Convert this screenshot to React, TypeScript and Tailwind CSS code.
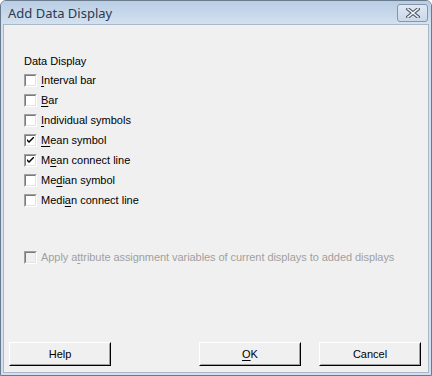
import React from "react";

const items = [
  { pre: "", key: "I", post: "nterval bar", checked: false },
  { pre: "", key: "B", post: "ar", checked: false },
  { pre: "", key: "I", post: "ndividual symbols", checked: false },
  { pre: "", key: "M", post: "ean symbol", checked: true },
  { pre: "M", key: "e", post: "an connect line", checked: true },
  { pre: "Me", key: "d", post: "ian symbol", checked: false },
  { pre: "Medi", key: "a", post: "n connect line", checked: false },
];

function CheckBox({ checked, disabled }: { checked?: boolean; disabled?: boolean }) {
  return (
    <span className="w-[13px] h-[13px] border border-t-[#a0a0a0] border-l-[#a0a0a0] border-b-white border-r-white flex shrink-0">
      <span
        className={`flex-1 border border-t-[#7a7a7a] border-l-[#7a7a7a] border-b-[#e3e3e3] border-r-[#e3e3e3] flex items-center justify-center ${
          disabled ? "bg-[#f0f0f0]" : "bg-white"
        }`}
      >
        {checked && (
          <svg width="7" height="7" viewBox="0 0 7 7">
            <path d="M0 2 L0 4 L2 6 L7 1 L7 -1 L2 4 Z" fill="#000" />
          </svg>
        )}
      </span>
    </span>
  );
}

function Button({ children }: { children: React.ReactNode }) {
  return (
    <button className="w-[102px] h-[24px] border border-t-white border-l-white border-b-black border-r-black bg-[#f0f0f0] flex">
      <span className="flex-1 border border-t-[#f0f0f0] border-l-[#f0f0f0] border-b-[#a0a0a0] border-r-[#a0a0a0] flex items-center justify-center text-black">
        {children}
      </span>
    </button>
  );
}

export default function App() {
  return (
    <div className="w-[432px] h-[376px] flex flex-col border border-[#6b7b8e] rounded-t-[6px] bg-[#d2dfee] overflow-hidden font-['Liberation_Sans',Arial,sans-serif] text-[11px] text-black">
      {/* title bar */}
      <div className="h-[23px] shrink-0 flex items-center justify-between pl-[7px] pr-[3px] bg-gradient-to-b from-[#b9cde4] to-[#d3e1f0]">
        <span className="font-['Noto_Sans',sans-serif] text-[13px] text-[#2c3a4d] pt-[2px]">Add Data Display</span>
        <span className="w-[31px] h-[18px] mt-[1px] rounded-[3px] border border-[#8496ac] bg-gradient-to-b from-[#dfe8f2] to-[#cbd8e8] flex items-center justify-center">
          <svg width="14" height="10" viewBox="0 0 14 10">
            <path d="M2 1 L12 9 M12 1 L2 9" stroke="#4d5a6a" strokeWidth="3.6" strokeLinecap="square" />
            <path d="M2 1 L12 9 M12 1 L2 9" stroke="#f4f6f9" strokeWidth="1.6" strokeLinecap="square" />
          </svg>
        </span>
      </div>

      {/* client area */}
      <div className="flex-1 mx-[2px] mb-[2px] border border-[#a9b8c9] bg-[#f0f0f0] flex flex-col pt-[27px]">
        <div className="pl-[20px] h-[18px] flex items-center">Data Display</div>
        {items.map((it, i) => (
          <div key={i} className="pl-[20px] h-[20px] flex items-center gap-[4px]">
            <CheckBox checked={it.checked} />
            <span>
              {it.pre}
              <span className="underline underline-offset-[2px]">{it.key}</span>
              {it.post}
            </span>
          </div>
        ))}

        <div className="mt-[37px] pl-[20px] h-[20px] flex items-center gap-[4px] text-[#a0a0a0]">
          <CheckBox disabled />
          <span className="tracking-[-0.06px]">
            Apply a<span className="underline underline-offset-[2px]">t</span>tribute assignment variables of current displays to added displays
          </span>
        </div>

        <div className="flex-1" />

        <div className="flex justify-between pl-[5px] pr-[7px] pb-[6px]">
          <Button>Help</Button>
          <div className="flex gap-[18px]">
            <Button>
              <span className="underline underline-offset-[2px]">O</span>K
            </Button>
            <Button>Cancel</Button>
          </div>
        </div>
      </div>
    </div>
  );
}
